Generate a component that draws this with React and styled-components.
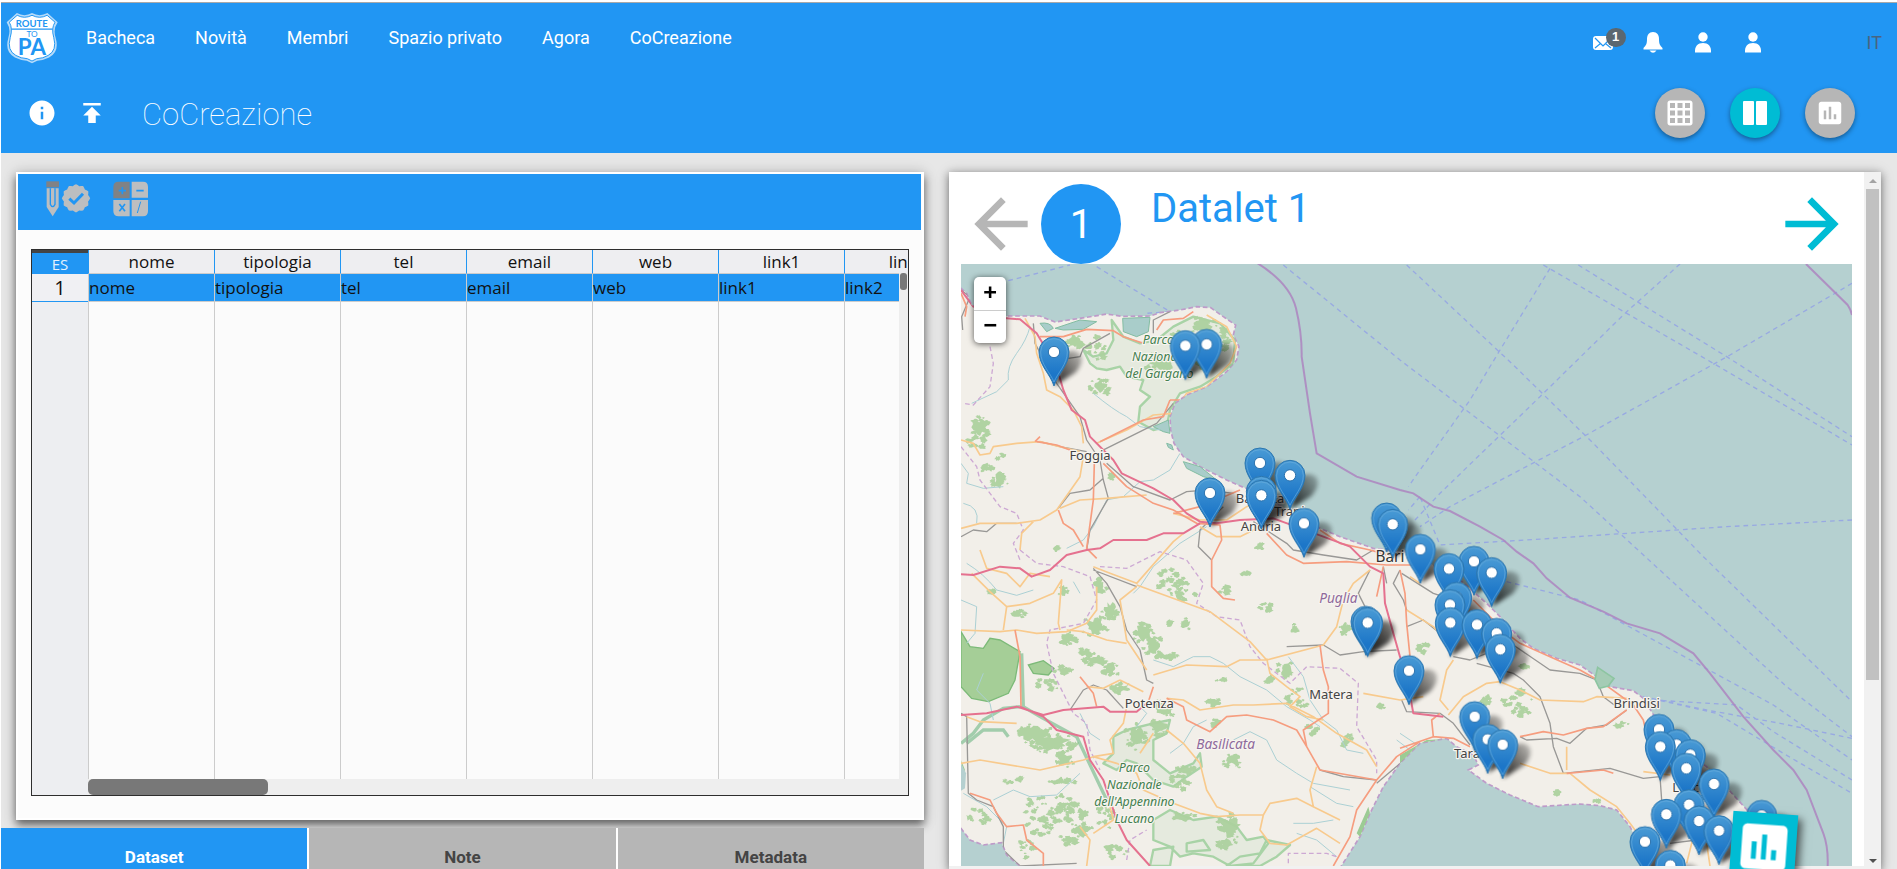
import React from "react";
import styled, { createGlobalStyle } from "styled-components";
import {
  MdInfo,
  MdPublish,
  MdGridOn,
  MdInsertChart,
  MdArrowBack,
  MdArrowForward,
} from "react-icons/md";

const BLUE = "#2196f3";
const CYAN = "#00bcd4";
const GRAY = "#b6b6b6";

const GlobalStyle = createGlobalStyle`
  * { box-sizing: border-box; }
  body { margin: 0; background: #fff; font-family: Roboto, "Liberation Sans", sans-serif; }
  button { font: inherit; border: 0; padding: 0; margin: 0; background: none; color: inherit; cursor: pointer; }
  svg { display: block; flex: none; }
`;

/* ---------- page frame ---------- */

const Page = styled.div`
  display: flex;
  flex-direction: column;
  height: 100vh;
  padding: 2px 0 0 1px;
  overflow: hidden;
`;

const Header = styled.header`
  flex: none;
  background: ${BLUE};
  border-top: 1px solid #a9a9a9;
  color: #fff;
`;

const NavRow = styled.div`
  display: flex;
  align-items: center;
  height: 70px;
  padding: 0 15px 0 5px;
`;

const LogoLink = styled.a`
  margin-right: 28px;
`;

const Nav = styled.nav`
  display: flex;
  flex: 1;
  gap: 40px;
`;

const NavLink = styled.a`
  color: #fff;
  font-size: 18px;
  line-height: 24px;
  text-decoration: none;
`;

const Tools = styled.div`
  display: flex;
  align-items: center;
  gap: 20px;
  padding-top: 9px;
`;

const ToolButton = styled.button`
  position: relative;
  display: flex;
  align-items: center;
  justify-content: center;
  width: 30px;
  height: 30px;
`;

const Badge = styled.span`
  position: absolute;
  top: 0;
  right: -8px;
  width: 20px;
  height: 19px;
  border-radius: 10px;
  background: #5b6770;
  font: bold 13px/18px "Liberation Sans", sans-serif;
  text-align: center;
`;

const Language = styled.a`
  margin-left: 79px;
  color: #49657f;
  font-size: 18px;
  line-height: 24px;
  text-decoration: none;
`;

const TitleRow = styled.div`
  display: flex;
  align-items: center;
  height: 80px;
  padding: 0 42px 0 26px;
`;

const TitleTools = styled.div`
  display: flex;
  gap: 20px;
`;

const PageTitle = styled.h1`
  flex: 1;
  margin: 0 0 0 35px;
  padding-top: 4px;
  font-size: 31px;
  font-weight: 100;
  line-height: 40px;
`;

const Fabs = styled.div`
  display: flex;
  gap: 25px;
`;

const Fab = styled.button`
  display: flex;
  align-items: center;
  justify-content: center;
  width: 50px;
  height: 50px;
  border-radius: 50%;
  background: ${(p) => (p.$active ? CYAN : GRAY)};
  box-shadow: 0 2px 5px rgba(0, 0, 0, 0.4);
`;

const Main = styled.main`
  display: grid;
  grid-template-columns: 1fr 1fr;
  flex: 1;
  min-height: 0;
  padding-top: 19px;
  background: #e7e7e7;
`;

/* ---------- dataset side ---------- */

const DatasetColumn = styled.section`
  display: flex;
  flex-direction: column;
  min-width: 0;
  min-height: 0;
  padding-right: 25px;
`;

const DatasetCard = styled.div`
  display: flex;
  flex: 1;
  flex-direction: column;
  min-height: 0;
  margin: 0 0 8px 15px;
  padding: 2px 3px 24px 2px;
  background: #fcfcfc;
  box-shadow: 0 5px 8px rgba(0, 0, 0, 0.5), 0 1px 14px rgba(0, 0, 0, 0.2), inset 0 0 0 2px #fff;
`;

const DatasetToolbar = styled.div`
  display: flex;
  flex: none;
  gap: 22px;
  height: 56px;
  padding: 7px 28px;
  background: ${BLUE};
`;

const ImageButton = styled.button`
  height: 36px;
`;

const GridFrame = styled.div`
  display: flex;
  flex: 1;
  flex-direction: column;
  min-height: 0;
  margin: 19px 12px 0 13px;
  border: 1px solid #2e2e2e;
`;

const GridBody = styled.div`
  position: relative;
  flex: 1;
  min-height: 0;
  overflow: hidden;
`;

const DataTable = styled.table`
  width: 938px;
  height: 100%;
  table-layout: fixed;
  border-spacing: 0;
  color: #111;
  font: 17px/22px "Open Sans", "Noto Sans", sans-serif;
`;

const HeadCell = styled.th`
  width: 126px;
  height: 24px;
  padding: 0;
  border-left: 1px solid ${BLUE};
  border-bottom: 1px solid #ccc;
  background: #eeeef1;
  font-weight: 400;
`;

const CornerCell = styled.th`
  width: 56px;
  height: 24px;
  padding: 0;
  border-top: 3px solid #444;
  background: ${BLUE};
  color: #e4f1fd;
  font-size: 15px;
  font-weight: 400;
  line-height: 18px;
`;

const RowNumber = styled.th`
  height: 28px;
  padding: 0;
  border-bottom: 1px solid ${BLUE};
  background: #f0f0f3;
  font-size: 20px;
  font-weight: 400;
`;

const DataCell = styled.td`
  height: 28px;
  padding: 0;
  border-left: 1px solid #ccc;
  border-bottom: 1px solid #ccc;
  background: ${BLUE};
`;

const EmptyCell = styled.td`
  padding: 0;
  border-left: ${(p) => (p.$head ? "0" : "1px solid #ccc")};
  background: ${(p) => (p.$head ? "#edeef1" : "#fbfbfb")};
`;

const GridVScroll = styled.div`
  position: absolute;
  top: 23px;
  right: 0;
  bottom: 0;
  width: 9px;
  background: #eee;
`;

const GridVThumb = styled.div`
  width: 7px;
  height: 17px;
  margin-left: 1px;
  border-radius: 3px;
  background: #787878;
`;

const GridHScroll = styled.div`
  flex: none;
  height: 16px;
  padding: 0 8px 0 56px;
  background: linear-gradient(to right, #edeef1 56px, #eee 56px);
`;

const GridHThumb = styled.div`
  width: 180px;
  height: 16px;
  border-radius: 5px;
  background: #787878;
`;

const Tabs = styled.div`
  display: flex;
  flex: none;
  gap: 2px;
  background: #fff;
`;

const Tab = styled.button`
  display: flex;
  flex: 1;
  align-items: flex-end;
  justify-content: center;
  height: 41px;
  background: ${(p) => (p.$active ? BLUE : GRAY)};
  color: ${(p) => (p.$active ? "#fff" : "#444")};
  font-size: 17px;
  font-weight: 700;
  line-height: 24px;
`;

/* ---------- datalet side ---------- */

const DataletColumn = styled.section`
  display: flex;
  min-width: 0;
  min-height: 0;
  padding-right: 16px;
`;

const DataletCard = styled.div`
  display: flex;
  flex: 1;
  min-width: 0;
  background: #fff;
  box-shadow: 0 2px 8px rgba(0, 0, 0, 0.45), 0 1px 14px rgba(0, 0, 0, 0.15);
`;

const DataletContent = styled.div`
  display: flex;
  flex: 1;
  flex-direction: column;
  min-width: 0;
  padding: 12px 12px 0;
  border-bottom: 3px solid #f1f1f1;
`;

const DataletHeader = styled.div`
  display: flex;
  flex: none;
  height: 80px;
`;

const ArrowButton = styled.button`
  width: 80px;
  height: 80px;
  color: ${(p) => p.$color};
`;

const DataletNumber = styled.div`
  width: 80px;
  height: 80px;
  border-radius: 50%;
  background: ${BLUE};
  color: #fff;
  font-size: 40px;
  line-height: 82px;
  text-align: center;
`;

const DataletTitle = styled.h2`
  flex: 1;
  margin: 0 0 0 30px;
  color: ${BLUE};
  font-size: 40px;
  font-weight: 400;
  line-height: 50px;
`;

const MapView = styled.div`
  position: relative;
  flex: 1;
  min-height: 0;
  overflow: hidden;
  background: #b5d0d0;
  & > svg { width: 100%; height: 100%; }
`;

const ZoomControl = styled.div`
  position: absolute;
  top: 13px;
  left: 13px;
  border-radius: 5px;
  background: #fff;
  box-shadow: 0 1px 6px rgba(0, 0, 0, 0.65);
`;

const ZoomButton = styled.button`
  display: block;
  width: 32px;
  height: 33px;
  padding-bottom: 4px;
  color: #000;
  font: bold 22px/28px "DejaVu Sans Mono", monospace;
  text-align: center;
  & + & { border-top: 1px solid #ccc; }
`;

const ScrollBar = styled.div`
  display: flex;
  flex-direction: column;
  align-items: center;
  width: 17px;
  background: #f1f1f1;
`;

const ScrollArrow = styled.div`
  display: flex;
  align-items: center;
  justify-content: center;
  height: 17px;
`;

const ScrollTrack = styled.div`
  flex: 1;
  width: 13px;
`;

const ScrollThumb = styled.div`
  height: 74%;
  background: #c1c1c1;
`;

const DataletsButton = styled.button`
  position: fixed;
  right: 101px;
  bottom: -12px;
  display: flex;
  align-items: center;
  justify-content: center;
  width: 65px;
  height: 68px;
  background: ${CYAN};
  box-shadow: 4px 4px 8px rgba(0, 0, 0, 0.6);
  transform: rotate(4deg);
`;

/* ---------- drawings ---------- */

const Logo = () => (
  <svg width="52" height="52" viewBox="17 36 158 158" role="img" aria-label="Route to PA">
    <path
      d="M19 67 L50 39 Q73 52 96 39 Q119 52 143 39 L174 67 Q159 88 168 115 Q180 158 148 174 Q132 182 112 184 L96 192 L80 184 Q60 182 44 174 Q12 158 24 115 Q33 88 19 67Z"
      fill="#b5dbfa"
    />
    <path
      d="M27 67 L51 46 Q73 58 96 46 Q119 58 142 46 L166 67 Q154 85 162 113 Q173 153 145 168 Q130 177 110 178 L96 185 L82 178 Q62 177 47 168 Q19 153 30 113 Q38 85 27 67Z"
      fill="#fff"
      stroke={BLUE}
      strokeWidth="3"
    />
    <path d="M34 88H158" stroke={BLUE} strokeWidth="4" />
    <g fill={BLUE} textAnchor="middle" fontFamily="Lato, sans-serif">
      <text x="95" y="82" fontSize="29" fontWeight="700">ROUTE</text>
      <text x="96" y="112" fontSize="25">TO</text>
      <text x="96" y="167" fontSize="68" fontWeight="700">PA</text>
    </g>
  </svg>
);

const MailIcon = () => (
  <svg width="20" height="14" viewBox="0 0 20 14">
    <rect width="20" height="14" rx="3" fill="#fff" />
    <path d="M2 2L7.500 7.500L2 12M7.500 7.500L10 10L12.500 7.500L18 12M12.500 7.500L18 2" fill="none" stroke={BLUE} strokeWidth="1.200" />
  </svg>
);

const BellIcon = () => (
  <svg width="20" height="21" viewBox="0 0 20 21" fill="#fff">
    <path d="M10 0C14 0 16 3 16 7C16 12 17 13.500 19.500 16V17.500H.500V16C3 13.500 4 12 4 7C4 3 6 0 10 0Z" />
    <path d="M6.500 18.500H13.500Q10 23 6.500 18.500Z" />
  </svg>
);

const PersonIcon = () => (
  <svg width="18" height="21" viewBox="0 0 18 21" fill="#fff">
    <circle cx="9" cy="5" r="4.700" />
    <path d="M1 20.500C.500 14 4 11 9 11S17.500 14 17 20.500Z" />
  </svg>
);

const ColumnsIcon = () => (
  <svg width="24" height="26" viewBox="0 0 24 26" fill="#fff">
    <rect y="1" width="11" height="24" rx="1" />
    <rect x="13" y="1" width="11" height="24" rx="1" />
  </svg>
);

const sealPoints = Array.from({ length: 48 }, (_, i) => {
  const a = (i / 48) * Math.PI * 2;
  const r = 40 + 2.5 * Math.cos(a * 12);
  return `${227 + r * Math.cos(a)},${594 + r * Math.sin(a)}`;
}).join(" ");

const ValidateIcon = () => (
  <svg width="45" height="36" viewBox="137 542 135 108">
    <rect x="138" y="543" width="38" height="18" fill="#808285" />
    <path d="M139 564H175V620L157 648L139 620Z" fill="#bcbec0" />
    <path d="M150 564V612Q157 626 164 612V564" fill="none" stroke={BLUE} strokeWidth="4" />
    <path d="M157 564V612" stroke="#bcbec0" strokeWidth="5" />
    <polygon points={sealPoints} fill="#bcbec0" />
    <path d="M207 595L221 608L248 580" fill="none" stroke={BLUE} strokeWidth="9" />
  </svg>
);

const CalculatorIcon = () => (
  <svg width="36" height="36" viewBox="338 542 108 108">
    <path d="M388 544V594H339V560Q339 544 355 544Z" fill="#808285" />
    <path d="M394 544H428Q443 544 443 560V592H394ZM394 599H443V632Q443 648 428 648H394ZM388 599V648H355Q339 648 339 632V599Z" fill="#bcbec0" />
    <g stroke={BLUE} strokeWidth="5" fill="none">
      <path d="M355 571H377M366 560V582M408 571H430M357 611L374 633M374 611L357 633" />
      <path d="M421 604L411 638" strokeWidth="3" />
    </g>
  </svg>
);

/* The map is drawn on a 2673 x 1806 canvas whose origin is (63, 72). */

function random(seed) {
  let s = seed * 7919 + 13;
  return () => {
    s = (s * 16807) % 2147483647;
    return s / 2147483647;
  };
}

function blob(cx, cy, rx, ry, next) {
  const points = [];
  for (let i = 0; i < 16; i += 1) {
    const a = (i / 16) * Math.PI * 2;
    const k = 0.5 + next() * 0.6;
    points.push(`${Math.round(cx + Math.cos(a) * rx * k)} ${Math.round(cy + Math.sin(a) * ry * k)}`);
  }
  return `M${points.join("L")}Z`;
}

function thicket([cx, cy, rx, ry, core = 1], index) {
  const next = random(index + 3);
  let d = core ? blob(cx, cy, rx * 0.75, ry * 0.75, next) : "";
  const count = Math.round((rx * ry) / 90) + 4;
  for (let i = 0; i < count; i += 1) {
    const a = next() * Math.PI * 2;
    const k = Math.sqrt(next());
    const size = 3 + next() * 7;
    d += blob(cx + Math.cos(a) * rx * k, cy + Math.sin(a) * ry * k, size * 1.4, size, next);
  }
  return d;
}

const WOODS = [
  [120, 562, 34, 34], [180, 720, 24, 34], [140, 685, 16, 10], [180, 650, 14, 9, 0], [110, 610, 25, 16, 0],
  [405, 305, 30, 22], [470, 330, 30, 40, 0], [480, 440, 32, 26], [660, 370, 50, 30], [790, 260, 40, 34],
  [515, 705, 16, 9, 0], [960, 915, 12, 14], [350, 925, 8, 4, 0], [150, 1050, 16, 9, 0], [230, 1120, 26, 15],
  [370, 1055, 16, 18], [480, 1040, 22, 30], [510, 1110, 26, 32], [465, 1160, 40, 34], [385, 1195, 36, 22],
  [610, 1180, 34, 40], [640, 1220, 34, 36], [680, 1250, 34, 14], [740, 1150, 14, 18], [685, 1150, 10, 12],
  [700, 1025, 50, 40, 0], [730, 1065, 40, 20, 0], [860, 1055, 20, 16], [975, 1100, 22, 14, 0], [990, 1106, 9, 9],
  [1063, 1163, 12, 11], [1215, 1165, 18, 24], [1040, 1290, 30, 28], [1075, 1380, 34, 36, 0], [470, 1260, 44, 20],
  [510, 1285, 30, 26], [440, 1235, 20, 12], [370, 1290, 28, 12], [320, 1335, 44, 18, 0], [545, 1345, 36, 16],
  [820, 1385, 20, 12], [825, 1452, 12, 12], [670, 1410, 32, 30], [660, 1460, 32, 26], [590, 1490, 36, 40],
  [280, 1480, 56, 34], [340, 1510, 70, 36], [375, 1560, 34, 26], [740, 1590, 34, 16], [720, 1620, 28, 34, 0],
  [875, 1560, 32, 20], [890, 1570, 12, 20], [365, 1625, 44, 10], [220, 1620, 26, 14, 0], [330, 1705, 80, 44, 0],
  [380, 1720, 60, 36, 0], [300, 1760, 40, 30, 0], [420, 1770, 40, 24], [500, 1730, 30, 40, 0], [110, 1725, 24, 20, 0],
  [260, 1820, 20, 34, 0], [385, 1800, 26, 20, 0], [530, 1830, 36, 26, 0], [730, 1730, 40, 14], [870, 1760, 40, 40],
  [860, 1810, 30, 20], [1120, 1470, 24, 16, 0], [1220, 1500, 18, 20], [1325, 1402, 10, 9], [1445, 1225, 16, 16, 0],
  [1635, 1380, 14, 18], [1755, 1278, 18, 6], [1740, 1390, 50, 40, 0], [2050, 1455, 20, 8, 0], [1850, 1660, 8, 5, 0],
  [1970, 1685, 10, 5, 0], [985, 1318, 10, 14], [130, 1740, 18, 10, 0], [920, 1000, 12, 8, 0], [840, 1320, 20, 4, 0],
  [850, 300, 20, 40, 0], [790, 360, 40, 26, 0], [720, 290, 30, 20, 0],
];

const PARKS = [
  "M430 330L460 350L500 340L520 300L515 240L550 290L600 310L650 300L700 260L760 230L840 250L885 300L880 370L830 410L780 440L720 460L690 510L680 560L640 570L595 545L600 500L630 470L600 450L610 420L560 410L540 380L500 390L470 385L450 370Z",
  "M520 1490L560 1470L640 1450L690 1440L680 1480L640 1500L640 1560L690 1600L760 1570L780 1540L785 1580L740 1610L700 1640L640 1620L590 1570L560 1560L530 1590L490 1570L520 1540Z",
  "M640 1740L690 1710L760 1740L830 1730L890 1760L920 1800L970 1790L985 1810L940 1870L870 1878L820 1850L760 1840L720 1850L690 1820L640 1800Z",
  "M640 1830L700 1820L690 1878L630 1878ZM740 1810L790 1800L810 1830L740 1835Z",
  "M980 1800L1050 1815L1010 1850L960 1878L860 1878L900 1850L960 1840Z",
];

const RIVERS = [
  "M270 260Q260 300 230 340T205 420L170 455L95 490", "M460 460Q520 510 560 530L600 560L660 570",
  "M63 670L85 700L80 730L130 745L190 740M70 790Q120 800 110 850",
  "M720 640L690 690L640 720L600 725L550 770L500 780L460 860L430 900L380 925",
  "M800 860L720 910L640 980L600 1040L580 1060", "M80 970Q130 1000 170 1050L230 1066L280 1050",
  "M63 1080L110 1100L105 1180L80 1210", "M400 1025L420 1060", "M640 1260L700 1280L760 1250L810 1250L850 1270L900 1310L980 1350L1040 1400L1110 1440L1140 1460",
  "M1045 1250L1090 1310L1110 1380L1150 1440L1190 1470L1220 1530L1270 1540", "M690 1540L730 1510L760 1460L800 1440",
  "M880 1500L930 1475L980 1500L1010 1560L1070 1600L1120 1630L1230 1650", "M1110 1640L1190 1690L1240 1700",
  "M1060 1750L1120 1750L1180 1740M1070 1780L1130 1800L1190 1850", "M160 1680L220 1650L270 1670L350 1665L420 1600",
  "M130 1300L110 1350L150 1390L160 1440", "M1370 1500L1410 1530M1380 1480L1440 1520", "M70 1660L140 1700L200 1760L190 1810",
  "M420 1420L450 1480L480 1500", "M590 1460L620 1420L600 1400",
];

const PRIMARY_ROADS = [
  "M255 235L285 290L290 340L310 400L320 450L360 470L400 510L425 560L430 610", "M63 600L100 610L120 645L150 640L160 620L230 610L300 605L380 625L420 635",
  "M470 610L560 570L640 525L700 520L740 460L800 440L870 370L890 320L860 260L800 225",
  "M430 650L420 710L350 810L300 840L230 850L120 850L63 865", "M360 805L420 780L500 775L560 770L620 765", "M700 820L780 840L860 840L920 800L960 780",
  "M780 860L830 890L900 890L960 860", "M280 845L245 880L240 930", "M95 1000L150 1055L200 1100L270 1090L340 1060L365 1020L355 1150L360 1170M200 1100L190 1170",
  "M63 1170L180 1175L230 1170L290 1180L380 1175L440 1150L470 1110L470 1040", "M120 930L140 985L200 1000L240 1040L270 1000L330 1010",
  "M460 980L510 1000L590 1030L700 905L730 880", "M590 1035L810 1115L930 1205L980 1260L1150 1215L1190 1160L1210 1080L1240 1030L1290 990",
  "M590 1040L540 1080L560 1200L620 1290", "M380 1170L430 1175L500 1200L560 1210", "M640 1305L740 1275L860 1280L900 1260L980 1260",
  "M980 1255L990 1300L1040 1340L1080 1370L1050 1400L1100 1430L1150 1440", "M680 1375L730 1380L780 1410L880 1395L940 1395L1040 1390L1120 1430L1190 1480L1280 1530L1310 1580",
  "M540 1320L490 1345L440 1340M540 1320L610 1355", "M560 1400L550 1450L510 1500L520 1540L460 1550L430 1560L300 1590L120 1560L63 1570",
  "M460 1550L530 1570L590 1600L610 1650L700 1690L780 1720L830 1730L900 1725L970 1725L990 1690L1070 1675L1120 1700L1200 1740",
  "M680 1470L730 1510L780 1570L800 1650L830 1700L880 1720", "M970 1725L960 1770L990 1810L1040 1815L1130 1765L1200 1810",
  "M1120 1700L1110 1650L1130 1580", "M1270 1360L1380 1380L1450 1370", "M1440 1030L1410 1010M1400 1110L1480 1160L1500 1180",
  "M1525 1410L1500 1380L1520 1290L1540 1260M1525 1425L1570 1370L1640 1330L1680 1325L1740 1350L1800 1380L1930 1385L1970 1370L2060 1375",
  "M1740 1570L1830 1600L1890 1600L1950 1650L2030 1700L2070 1750L2100 1790", "M1880 1590L1880 1520", "M2260 1790L2240 1870M2300 1810L2310 1878", "M2110 1595L2190 1605",
  "M640 1480L600 1540M460 1780L520 1740L510 1700M440 1878L450 1800L420 1760", "M230 1450L120 1445L80 1430",
];

const TRUNK_ROADS = [
  "M300 290L370 290L440 268L520 272L550 290L610 310", "M650 270L670 240L730 235L760 215", "M690 480L720 480M690 480L670 530L610 540L480 605",
  "M290 605L350 615L390 630M285 605L300 590", "M463 670L460 780L440 925L470 955", "M355 810L370 850L400 870L430 920",
  "M490 670L560 740L640 790L700 810L770 850L840 855L845 900L815 960L815 1040L850 1075L885 1080",
  "M700 820L780 800L900 750", "M1140 870L1200 910L1290 930L1360 950", "M980 880L1040 945L1090 970L1220 965L1340 975L1440 975",
  "M225 1170L240 1250L243 1400", "M470 1400L460 1360L420 1310", "M640 1340L620 1400", "M680 1375L730 1400L740 1440L810 1475L860 1430L920 1425L1000 1440L1070 1470L1100 1520L1140 1590L1310 1620",
  "M1140 1215L1150 1290L1165 1340L1165 1420L1090 1470L1100 1520", "M1440 1505L1370 1550L1310 1620L1250 1710L1230 1790L1180 1878",
  "M1380 1525L1480 1490L1540 1495L1590 1520", "M1380 990L1395 1060L1400 1150L1410 1250M1330 980L1310 1070",
  "M1600 1080L1700 1180L1740 1210L1830 1250L1920 1290L1990 1330L2080 1395L2110 1440L2130 1530", "M2060 1410L1990 1460L1940 1465L1870 1485L1810 1475L1740 1490",
  "M1880 1600L1990 1590L2020 1600", "M1480 1490L1475 1440L1500 1420", "M63 160L80 200L75 230", "M90 1660L150 1680L170 1720L200 1760L250 1755L260 1800L310 1840L310 1878",
];

const MOTORWAYS = [
  "M63 150L100 200L200 235L240 238L290 280L350 380L370 450L395 510L435 540L450 590L520 660L545 700L640 745L700 780L740 820L780 845L830 850L900 840L1000 835L1150 890L1230 920L1290 980L1330 1000L1335 1090L1360 1180L1380 1250",
  "M63 1003L100 1005L180 980L240 985L275 1010L330 990L380 945L440 930L480 925L520 900L620 900L670 880L730 880L780 850",
  "M63 1425L140 1420L230 1400L310 1425L370 1410L490 1400L510 1415L590 1415L620 1390",
  "M240 1400L310 1430L350 1470L430 1490L450 1560L490 1620L530 1740L560 1800L630 1878",
  "M1380 1250L1400 1310L1420 1420L1510 1430",
];

const RAILWAYS = [
  "M63 150L90 170L65 230L68 270M280 250L285 310L350 430L420 530L440 600L480 660L490 720L505 775L450 870L440 930",
  "M480 635L590 580L650 550L700 490M690 215L640 240L640 280M385 355L420 350L430 325L510 280",
  "M500 670L580 740L690 780L740 755L800 750L880 760", "M355 805L390 760L450 750L490 715", "M300 605L360 620L440 635",
  "M63 890L100 870L140 875L170 850L230 850", "M850 800L780 870L775 920L815 960M1380 990L1360 1030L1390 1080L1400 1110",
  "M940 845L1040 910L1060 930L1150 945L1250 960L1300 930", "M460 985L500 1030L540 1100L560 1170L600 1230L620 1320L640 1330M590 1040L460 990",
  "M390 1410L430 1350L460 1335L500 1350L550 1405", "M63 1420L80 1430L85 1660L110 1680L160 1700L190 1760L190 1830L240 1878L410 1870",
  "M1040 1220L1150 1215L1200 1245L1270 1235L1370 1230", "M1290 990L1255 1060L1275 1100M1330 980L1340 1030", "M1310 1630L1440 1520M1140 1590L1210 1610L1310 1620",
  "M1385 1000L1480 1060L1540 1080L1580 1130M1400 1160L1450 1140L1500 1180M1540 1250L1590 1260L1640 1240",
  "M1610 1270L1720 1300L1750 1320L1800 1370L1830 1450L1840 1520L1870 1600L2010 1585L2110 1615L2160 1610L2165 1680",
  "M1720 1215L1830 1290L1920 1300L1970 1320L1990 1370L2030 1400M1740 1490L1760 1500L1850 1495L1890 1510L1940 1465L2000 1455L2060 1410M1590 1515L1540 1450L1500 1420L1400 1415L1385 1380M2190 1810L2270 1800",
];

const BOUNDARIES = [
  "M150 320L160 370L150 440L100 495L70 490M63 620L110 680L120 720L180 800L230 820L250 870L220 910L240 960",
  "M240 930L290 970L370 980L450 1010L470 1080L430 1150L330 1170L320 1210L340 1300L400 1420L440 1450L450 1530L480 1590",
  "M480 980L560 985L660 935L740 960L790 1030L770 1090L830 1130L900 1140L930 1220L970 1270L1050 1330L1100 1280L1200 1285L1255 1330L1250 1460L1310 1560L1310 1600",
  "M560 1860L570 1800L620 1770M1045 1870L1045 1840L1160 1840L1190 1850",
];

const FERRIES = [
  "M205 122L390 75M470 80L690 215L620 220", "M1030 75L1380 360L1920 770L2540 1340L2736 1490", "M1400 75L1720 375L1960 610L2290 950L2736 1385",
  "M1830 85L1680 330L1590 480L1440 690L1405 740", "M2220 72L2060 215L1800 470L1500 760L1425 840", "M2736 130L2370 345L1930 590L1530 800L1440 860",
  "M1810 75L2060 220L2320 370L2736 615", "M1915 75L2100 190L2360 350L2736 590", "M2736 840L2360 860L1760 900L1500 915L1440 770",
  "M1700 1025L1920 1080L2500 1395L2736 1560", "M1440 770L1405 810", "M2110 1370L2300 1410L2520 1450L2736 1495",
  "M2110 1370L2330 1420L2530 1540L2736 1660", "M2140 1380L2390 1395L2500 1475L2736 1620",
];

const MARITIME = "M950 68Q1050 130 1068 205T1085 350L1110 520L1130 640L1250 710L1380 750L1420 760L1480 800L1530 813L1620 860L1690 900L1730 935L1780 970L1820 1015L1890 1073L1990 1115L2060 1150L2160 1180L2260 1240L2310 1300L2410 1430L2500 1530L2560 1590L2600 1650L2650 1780Q2665 1820 2663 1878M2598 72L2723 195Q2733 210 2736 225";

const COAST = "M40 140L63 145L80 160L95 195L150 215L200 228L300 228L345 246L440 232L500 222L545 229L630 228L660 218L720 210L770 200L812 203L850 230L887 255L880 285L897 320L890 360L860 395L800 440L740 465L705 490L690 530L692 570L702 610L730 650L790 685L860 720L910 742L960 760L1050 815L1140 865L1200 890L1300 925L1390 935L1480 975L1560 1020L1640 1090L1680 1130L1740 1195L1780 1225L1850 1255L1920 1275L1970 1310L2010 1340L2080 1352L2110 1375L2150 1440L2190 1480L2230 1530L2300 1580L2350 1630L2380 1665L2440 1730L2470 1800L2450 1900L2125 1900L2090 1800L2070 1760L2030 1710L1980 1697L1920 1692L1795 1700L1710 1665L1640 1630L1585 1590L1615 1575L1600 1545L1550 1520L1520 1495L1440 1510L1380 1570L1330 1640L1290 1720L1260 1790L1190 1900L260 1900L240 1878L200 1845L185 1808L130 1815L90 1800L63 1765L40 1740Z";

const LABELS = [
  ["Foggia", 450, 660, "town"], ["Barletta", 960, 788, "town"], ["Trani", 1048, 828, "town"], ["Andria", 963, 873, "town"],
  ["Bari", 1350, 966, "city"], ["Potenza", 628, 1404, "town"], ["Matera", 1173, 1376, "town"], ["Taranto", 1612, 1553, "town"],
  ["Brindisi", 2090, 1404, "town"], ["Lecce", 2248, 1656, "town"], ["Puglia", 1195, 1090, "region"], ["Basilicata", 857, 1528, "region"],
  ["Parco", 655, 311, "park"], ["Nazionale", 658, 363, "park"], ["del Gargano", 658, 415, "park"],
  ["Parco", 583, 1595, "park"], ["Nazionale", 583, 1647, "park"], ["dell'Appennino", 583, 1698, "park"], ["Lucano", 583, 1750, "park"],
];

const LABEL_STYLES = {
  town: { fill: "#444", fontSize: 39 },
  city: { fill: "#333", fontSize: 46 },
  region: { fill: "#8f6a9c", fontSize: 41, fontStyle: "italic" },
  park: { fill: "#43804f", fontSize: 37, fontStyle: "italic" },
};

/* Positions of the marker tips, back to front. */
const MARKERS = [
  [800, 415], [736, 419], [342, 438], [960, 771], [1050, 808], [964, 856], [964, 868], [810, 861], [1340, 936], [1358, 955], [1092, 952],
  [1441, 1030], [1602, 1066], [1527, 1088], [1655, 1100], [1550, 1174], [1530, 1196], [1278, 1246], [1283, 1250], [1531, 1250], [1611, 1256], [1670, 1282],
  [1681, 1330], [1407, 1394], [1604, 1532], [1643, 1600], [1688, 1616], [2157, 1570], [2210, 1616], [2161, 1622], [2251, 1646],
  [2239, 1687], [2322, 1734], [2247, 1796], [2179, 1825], [2465, 1828], [2277, 1845], [2337, 1874], [2115, 1907], [2191, 1978],
];

const lines = (paths, props) => <path d={paths.join("")} fill="none" strokeLinejoin="round" {...props} />;

const MapDrawing = () => (
  <svg viewBox="63 72 2673 1806" preserveAspectRatio="xMinYMin slice" role="img" aria-label="Mappa della Puglia">
    <defs>
      <linearGradient id="pinFill" x1="0" y1="0" x2="0" y2="1">
        <stop offset="0" stopColor="#4a9bd5" />
        <stop offset="0.75" stopColor="#1c76c8" />
      </linearGradient>
      <linearGradient id="shadeFill" x1="0" y1="1" x2="1" y2="0">
        <stop offset="0.2" stopColor="#000" />
        <stop offset="1" stopColor="#000" stopOpacity="0.25" />
      </linearGradient>
      <filter id="pinShade" x="-50%" y="-50%" width="200%" height="200%">
        <feGaussianBlur stdDeviation="7" />
      </filter>
      <clipPath id="landClip">
        <path d={COAST} />
      </clipPath>
      <path id="shade" d="M0 0L32 -94Q52 -116 78 -98Q94 -74 64 -40Z" fill="url(#shadeFill)" />
      <g id="pin">
        <path d="M0 0C-10 -34 -45 -62 -45 -102A45 45 0 0 1 45 -102C45 -62 10 -34 0 0Z" fill="url(#pinFill)" stroke="#2c76ae" strokeWidth="3" />
        <path d="M0 -12C-11 -40 -40 -65 -40 -102A40 40 0 0 1 40 -102C40 -65 11 -40 0 -12Z" fill="none" stroke="#69addd" strokeWidth="2" />
        <circle cy="-102" r="17" fill="#fff" stroke="#2c72ad" strokeWidth="3" />
      </g>
    </defs>
    <path d="M63 72H2736V1878H63Z" fill="#b5d0d0" />
    {lines(FERRIES, { stroke: "#98a9e2", strokeWidth: 4, strokeDasharray: "14 12" })}
    <path d={MARITIME} fill="none" stroke="#ad85bf" strokeWidth="6" opacity="0.85" />
    <path d={COAST} fill="#f2efe9" stroke="#be9bc9" strokeWidth="5" strokeDasharray="14 8" />
    <g clipPath="url(#landClip)">
      <path d="M63 1175L90 1220L130 1225L150 1195L180 1200L240 1235L225 1320L205 1360L145 1385L95 1375L63 1340Z" fill="#a5ce97" stroke="#7cba78" strokeWidth="4" />
      <path d="M265 1275L310 1262L342 1285L325 1305L280 1300Z" fill="#a5ce97" stroke="#7cba78" strokeWidth="4" />
      {lines(PARKS, { fill: "#e3e9dc", stroke: "#9cce9b", strokeWidth: 7, opacity: 0.85 })}
      <path d={WOODS.map(thicket).join("")} fill="#acd19e" opacity="0.95" />
      <path d="M63 1510L100 1480L130 1440L190 1405L240 1400M80 1510L130 1470L190 1470L205 1490M245 1240L250 1400L300 1430L410 1490L500 1680" fill="none" stroke="#6db584" strokeWidth="10" opacity="0.6" />
      <path d="M1380 1570L1440 1522L1520 1497L1460 1500L1380 1545ZM1290 1720L1260 1790L1250 1780L1285 1700ZM63 1560L75 1590L70 1600Z" fill="#9ccb94" />
      <path d="M63 1570L78 1600L75 1645L63 1652Z" fill="#b5d0d0" />
      <path d="M300 250Q330 245 340 265L320 275ZM345 265L420 240L470 245L430 268L370 270ZM548 235L630 232L625 275L590 290L550 275ZM640 560L685 540L690 580L670 575ZM730 665L780 680L830 720L790 710L740 685ZM680 610L695 615L700 630L685 622Z" fill="#a9cdca" stroke="#83bda2" strokeWidth="3" />
      {lines(RIVERS, { stroke: "#abd0d4", strokeWidth: 3 })}
      {lines(BOUNDARIES, { stroke: "#cda9d4", strokeWidth: 4, strokeDasharray: "14 9" })}
      {lines(RAILWAYS, { stroke: "#999896", strokeWidth: 4 })}
      {lines(PRIMARY_ROADS, { stroke: "#f8ca8d", strokeWidth: 5 })}
      {lines(TRUNK_ROADS, { stroke: "#f69d7f", strokeWidth: 5 })}
      {lines(MOTORWAYS, { stroke: "#e5718f", strokeWidth: 6 })}
    </g>
    <path d="M1973 1282L2022 1315L2005 1338L1978 1345L1965 1318Z" fill="#a5ccb5" stroke="#8dc5a1" strokeWidth="5" />
    <g fontFamily='"Noto Sans", "Open Sans", sans-serif' textAnchor="middle" stroke="#f8f5f0" strokeWidth="7" strokeLinejoin="round" paintOrder="stroke">
      {LABELS.map(([text, x, y, kind]) => (
        <text key={`${text}${y}`} x={x} y={y} {...LABEL_STYLES[kind]}>{text}</text>
      ))}
    </g>
    <g filter="url(#pinShade)" opacity="0.85">
      {MARKERS.map(([x, y]) => <use key={`${x}-${y}`} href="#shade" x={x} y={y} opacity="0.9" />)}
    </g>
    {MARKERS.map(([x, y]) => <use key={`${x}-${y}`} href="#pin" x={x} y={y} />)}
  </svg>
);

/* ---------- content ---------- */

const NAV_ITEMS = ["Bacheca", "Novità", "Membri", "Spazio privato", "Agora", "CoCreazione"];
const COLUMNS = ["nome", "tipologia", "tel", "email", "web", "link1", "link2"];
const TABS = ["Dataset", "Note", "Metadata"];

const Triangle = ({ down }) => (
  <svg width="8" height="4" viewBox="0 0 8 4">
    <path d={down ? "M0 0H8L4 4Z" : "M0 4H8L4 0Z"} fill={down ? "#505050" : "#a3a3a3"} />
  </svg>
);

export default function App() {
  return (
    <Page>
      <GlobalStyle />
      <Header>
        <NavRow>
          <LogoLink href="#home"><Logo /></LogoLink>
          <Nav>
            {NAV_ITEMS.map((item) => <NavLink key={item} href="#nav">{item}</NavLink>)}
          </Nav>
          <Tools>
            <ToolButton aria-label="Messaggi"><MailIcon /><Badge>1</Badge></ToolButton>
            <ToolButton aria-label="Notifiche"><BellIcon /></ToolButton>
            <ToolButton aria-label="Profilo"><PersonIcon /></ToolButton>
            <ToolButton aria-label="Account"><PersonIcon /></ToolButton>
            <Language href="#lingua">IT</Language>
          </Tools>
        </NavRow>
        <TitleRow>
          <TitleTools>
            <ToolButton aria-label="Informazioni"><MdInfo size={30} /></ToolButton>
            <ToolButton aria-label="Pubblica"><MdPublish size={30} /></ToolButton>
          </TitleTools>
          <PageTitle>CoCreazione</PageTitle>
          <Fabs>
            <Fab aria-label="Tabella"><MdGridOn size={30} /></Fab>
            <Fab $active aria-label="Vista divisa"><ColumnsIcon /></Fab>
            <Fab aria-label="Grafico"><MdInsertChart size={30} /></Fab>
          </Fabs>
        </TitleRow>
      </Header>

      <Main>
        <DatasetColumn>
          <DatasetCard>
            <DatasetToolbar>
              <ImageButton aria-label="Convalida"><ValidateIcon /></ImageButton>
              <ImageButton aria-label="Calcola"><CalculatorIcon /></ImageButton>
            </DatasetToolbar>
            <GridFrame>
              <GridBody>
                <DataTable>
                  <thead>
                    <tr>
                      <CornerCell>ES</CornerCell>
                      {COLUMNS.map((name) => <HeadCell key={name} scope="col">{name}</HeadCell>)}
                    </tr>
                  </thead>
                  <tbody>
                    <tr>
                      <RowNumber scope="row">1</RowNumber>
                      {COLUMNS.map((name) => <DataCell key={name}>{name}</DataCell>)}
                    </tr>
                    <tr aria-hidden="true">
                      <EmptyCell $head />
                      {COLUMNS.map((name) => <EmptyCell key={name} />)}
                    </tr>
                  </tbody>
                </DataTable>
                <GridVScroll><GridVThumb /></GridVScroll>
              </GridBody>
              <GridHScroll><GridHThumb /></GridHScroll>
            </GridFrame>
          </DatasetCard>
          <Tabs role="tablist">
            {TABS.map((tab, i) => (
              <Tab key={tab} role="tab" aria-selected={i === 0} $active={i === 0}>{tab}</Tab>
            ))}
          </Tabs>
        </DatasetColumn>

        <DataletColumn>
          <DataletCard>
            <DataletContent>
              <DataletHeader>
                <ArrowButton $color={GRAY} aria-label="Precedente"><MdArrowBack size={80} /></ArrowButton>
                <DataletNumber>1</DataletNumber>
                <DataletTitle>Datalet 1</DataletTitle>
                <ArrowButton $color={CYAN} aria-label="Successivo"><MdArrowForward size={80} /></ArrowButton>
              </DataletHeader>
              <MapView>
                <MapDrawing />
                <ZoomControl>
                  <ZoomButton aria-label="Ingrandisci">+</ZoomButton>
                  <ZoomButton aria-label="Riduci">−</ZoomButton>
                </ZoomControl>
              </MapView>
            </DataletContent>
            <ScrollBar>
              <ScrollArrow><Triangle /></ScrollArrow>
              <ScrollTrack><ScrollThumb /></ScrollTrack>
              <ScrollArrow><Triangle down /></ScrollArrow>
            </ScrollBar>
          </DataletCard>
        </DataletColumn>
      </Main>

      <DataletsButton aria-label="Datalet">
        <MdInsertChart size={60} color="#fff" />
      </DataletsButton>
    </Page>
  );
}
